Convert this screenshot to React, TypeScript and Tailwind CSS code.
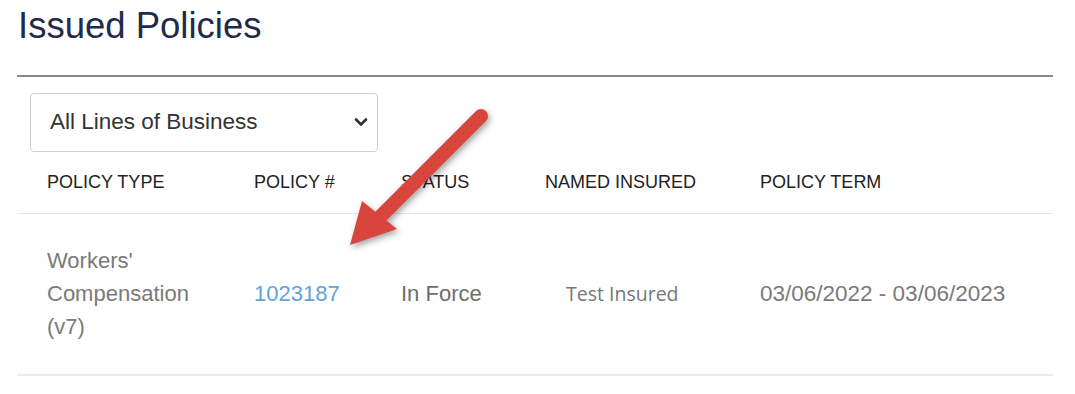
import React from 'react';

const columns = [
    { label: 'Policy Type', width: 'w-[207px]' },
    { label: 'Policy #', width: 'w-[147px]' },
    { label: 'Status', width: 'w-[144px]' },
    { label: 'Named Insured', width: 'w-[215px]' },
    { label: 'Policy Term', width: 'w-[323px]' },
];

// red annotation arrow drawn over the table
const Arrow: React.FC = () => (
    <svg
        className="pointer-events-none absolute left-0 top-0"
        width={1075}
        height={394}
        viewBox="0 0 1075 394"
        style={{ filter: 'drop-shadow(2px 3px 3px rgba(0,0,0,0.35))' }}
    >
        <line x1={481} y1={116} x2={376} y2={221} stroke="#d8453d" strokeWidth={14} strokeLinecap="round" />
        <polygon points="350,245 362,201 397,229" fill="#d8453d" />
    </svg>
);

const App: React.FC = () => {
    return (
        <div className="relative h-[394px] w-[1075px] overflow-hidden bg-white font-['Liberation_Sans',Arial,sans-serif]">
            <div className="ml-[17px] mr-[22px]">
                <h1 className="pl-px pt-[8px] text-[36.5px] leading-none text-[#1f2b4b]">Issued Policies</h1>
                <div className="mt-[30px] h-[2px] bg-[#8a8a8a]" />

                {/* line of business filter */}
                <div className="ml-[13px] mt-[16px] flex h-[59px] w-[348px] items-center justify-between rounded-[4px] border border-[#cfcfcf] pl-[19px] pr-[9px]">
                    <span className="text-[22.5px] text-[#333]">All Lines of Business</span>
                    <svg width="14" height="10" viewBox="0 0 14 10">
                        <path d="M2 2.5 L7 7.5 L12 2.5" fill="none" stroke="#333" strokeWidth="2.6" strokeLinecap="round" strokeLinejoin="round" />
                    </svg>
                </div>

                {/* table */}
                <div className="flex h-[62px] items-center border-b border-[#e6e6e6]">
                    {columns.map((col) => (
                        <div key={col.label} className={`${col.width} pl-[30px] text-[18px] uppercase text-[#222]`}>
                            {col.label}
                        </div>
                    ))}
                </div>
                <div className="flex h-[162px] items-center border-b-2 border-[#ececec] text-[22px] leading-[33px]">
                    <div className="w-[207px] pl-[30px] pr-[20px] text-[#7a7a7a]">Workers' Compensation (v7)</div>
                    <div className="w-[147px] pl-[30px] text-[#62a2dd]">1023187</div>
                    <div className="w-[144px] pl-[30px] text-[#6e6e6e]">In Force</div>
                    <div className="w-[215px] pl-[51px] font-['Open_Sans',sans-serif] text-[19.5px] text-[#777]">Test Insured</div>
                    <div className="w-[323px] pl-[30px] text-[22.5px] text-[#7a7a7a]">03/06/2022 - 03/06/2023</div>
                </div>
            </div>
            <Arrow />
        </div>
    );
};

export default App;
